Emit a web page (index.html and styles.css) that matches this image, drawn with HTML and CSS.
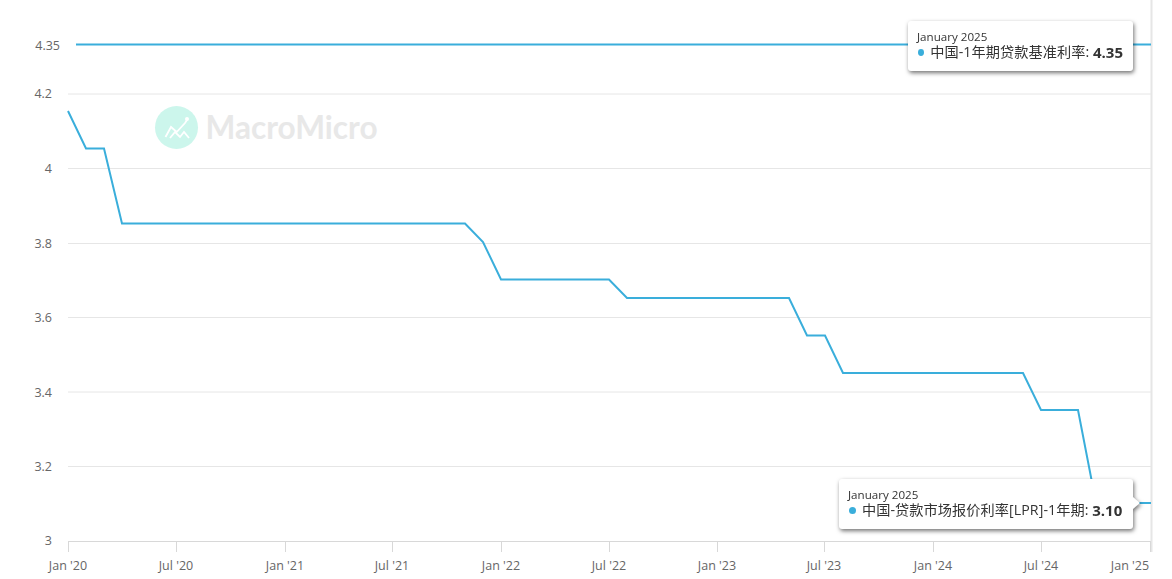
FILE: index.html
```html
<!DOCTYPE html>
<html lang="zh">
<head>
<meta charset="utf-8">
<title>中国贷款利率</title>
<link rel="stylesheet" href="styles.css">
</head>
<body>
<main class="chart">
<svg class="plot" width="1172" height="579" viewBox="0 0 1172 579">
  <g class="grid">
    <path d="M68 94H1151"/>
    <path d="M68 168.500H1151"/>
    <path d="M68 243.500H1151"/>
    <path d="M68 317.500H1151"/>
    <path d="M68 392H1151"/>
    <path d="M68 466.500H1151"/>
  </g>
  <path class="edge" d="M1151.500 0V552"/>
  <g class="axis">
    <path d="M68 541.500H1151"/>
    <path d="M68.500 541V552M176.500 541V552M285.500 541V552M392.500 541V552M501.500 541V552M609.500 541V552M717.500 541V552M824.500 541V552M933.500 541V552M1041.500 541V552M1150.500 541V552"/>
  </g>
  <g class="watermark">
    <circle class="mark-disc" cx="176.500" cy="127.500" r="21.500"/>
    <path class="mark-line" d="M165.500 137L171 127L176.700 132L185 123L187 120"/>
    <path class="mark-line" d="M170 138L175 132L180 137L184 132L189 138"/>
    <circle class="mark-dot" cx="187" cy="119" r="2"/>
    <text class="mark-name" x="205.500" y="139">MacroMicro</text>
  </g>
  <g class="labels-y">
    <text x="60" y="50">4.35</text>
    <text x="52" y="98">4.2</text>
    <text x="52" y="173">4</text>
    <text x="52" y="248">3.8</text>
    <text x="52" y="322">3.6</text>
    <text x="52" y="397">3.4</text>
    <text x="52" y="471">3.2</text>
    <text x="52" y="545">3</text>
  </g>
  <g class="labels-x">
    <text x="68" y="570">Jan '20</text>
    <text x="176" y="570">Jul '20</text>
    <text x="285" y="570">Jan '21</text>
    <text x="392" y="570">Jul '21</text>
    <text x="501" y="570">Jan '22</text>
    <text x="609" y="570">Jul '22</text>
    <text x="717" y="570">Jan '23</text>
    <text x="824" y="570">Jul '23</text>
    <text x="933" y="570">Jan '24</text>
    <text x="1041" y="570">Jul '24</text>
    <text x="1130" y="570">Jan '25</text>
  </g>
  <path class="series" d="M76 44.500H1151"/>
  <path class="series" d="M68 111L86 148.500H104L122 223.500H465L483 242L501 279.500H609L627 298H789L807 335.500H825L843 373H1023L1041 410H1078L1096 503H1151"/>
</svg>
<div class="tip tip-top">
  <div class="tip-date">January 2025</div>
  <div class="tip-row"><span class="dot"></span><span class="tip-name">中国-1年期贷款基准利率: </span><b>4.35</b></div>
</div>
<div class="tip tip-bottom">
  <div class="tip-date">January 2025</div>
  <div class="tip-row"><span class="dot"></span><span class="tip-name">中国-贷款市场报价利率[LPR]-1年期: </span><b>3.10</b></div>
  <span class="tip-arrow"></span>
</div>
</main>
</body>
</html>
```
FILE: styles.css
```css
html, body { margin: 0; padding: 0; background: #fff; }
.chart {
  position: relative;
  width: 1172px;
  height: 579px;
  overflow: hidden;
  font-family: "Open Sans", "Noto Sans CJK SC", sans-serif;
}
.plot { display: block; }
.grid path { stroke: #e6e6e6; stroke-width: 1; fill: none; }
.edge { stroke: #e6e6e6; stroke-width: 2; fill: none; }
.axis path { stroke: #d8d8d8; stroke-width: 1; fill: none; }
.series { stroke: #3aaedb; stroke-width: 2; fill: none; stroke-linejoin: miter; }
.labels-y text { font-size: 12.5px; fill: #666; text-anchor: end; }
.labels-x text { font-size: 12.5px; fill: #666; text-anchor: middle; }
.mark-disc { fill: #ccf6ec; }
.mark-line { fill: none; stroke: #fff; stroke-width: 1.8; }
.mark-dot { fill: #fff; }
.mark-name { font-family: "Lato", sans-serif; font-size: 31.6px; font-weight: 700; fill: #e8e8e8; }
.tip {
  position: absolute;
  right: 39px;
  box-sizing: border-box;
  height: 50px;
  padding: 9px 10px 0 9px;
  background: #fff;
  border-radius: 3px;
  filter: drop-shadow(1px 2px 2px rgba(0, 0, 0, 0.55));
  color: #333;
  white-space: nowrap;
}
.tip-top { top: 21px; width: 225px; }
.tip-bottom { top: 479px; width: 294px; }
.tip-date { font-size: 11.6px; line-height: 14px; }
.tip-row { display: flex; align-items: center; margin-top: -2px; font-size: 14.2px; line-height: 20px; white-space: pre; }
.tip-name { letter-spacing: 0.06px; }
.tip-row b { font-size: 15px; font-weight: 700; }
.dot {
  width: 7px;
  height: 7px;
  margin: 0 6px 0 1px;
  border-radius: 50%;
  background: #3aaedb;
}
.tip-arrow {
  position: absolute;
  top: 18px;
  right: -7px;
  width: 0;
  height: 0;
  border-style: solid;
  border-width: 6px 0 6px 7px;
  border-color: transparent transparent transparent #fff;
}
```
